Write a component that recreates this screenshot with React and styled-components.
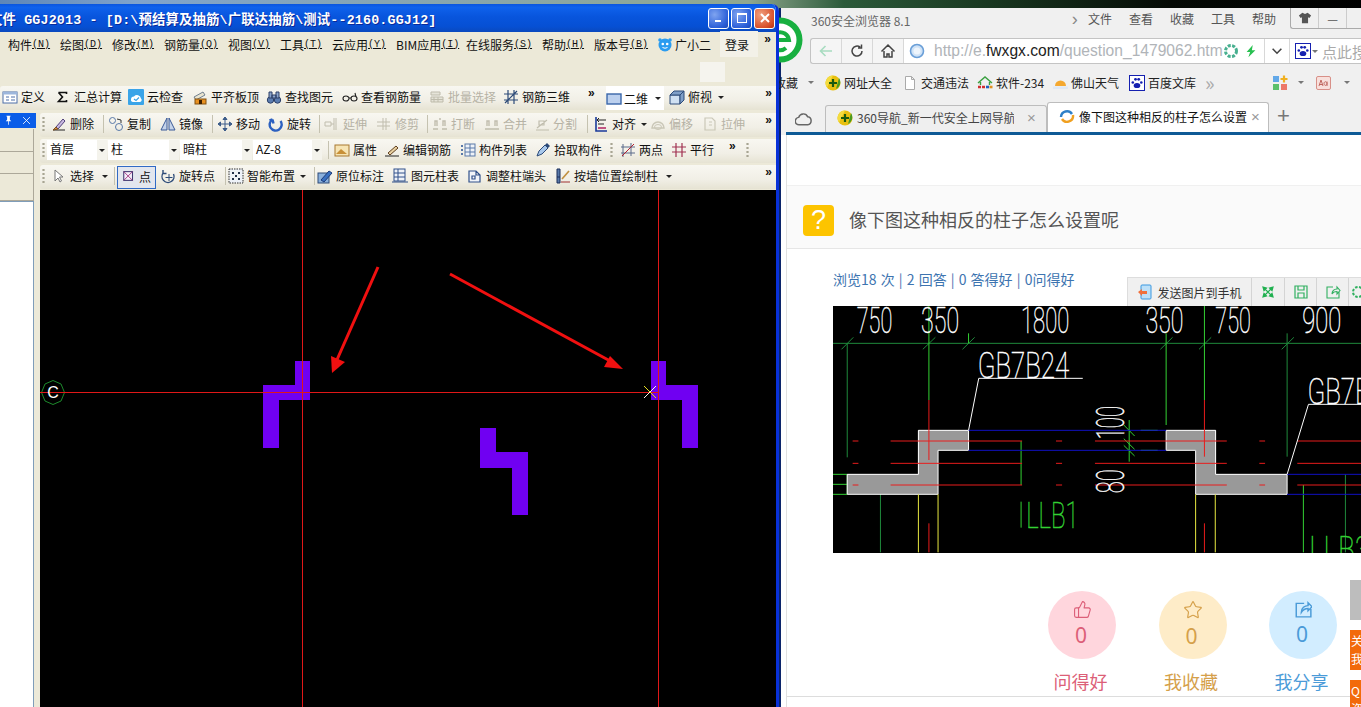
import React from 'react';
import styled, { createGlobalStyle } from 'styled-components';
import { ThumbsUp, Star } from 'lucide-react';

const Global = createGlobalStyle`
    html, body {
        margin: 0;
        padding: 0;
        overflow: hidden;
    }
    body {
        font-family: "Noto Sans CJK SC", "Liberation Sans", sans-serif;
        font-size: 12px;
    }
`;

const Desktop = styled.div`
    width: 1361px;
    height: 707px;
    display: flex;
    align-items: flex-start;
    overflow: hidden;
    background: linear-gradient(90deg, #5d86b8 0, #7fa3cc 10%, #90a890 55%, #2c5a3a 62%, #1a3a22 72%, #050a05 86%, #000 100%);
`;

/* ---------- left window ---------- */

const Window = styled.div`
    position: relative;
    z-index: 2;
    width: 779px;
    height: 703px;
    margin-top: 4px;
    flex: none;
    display: flex;
    flex-direction: column;
    background: #ece9d8;
    border-right: 3px solid #0831d9;
    box-sizing: border-box;
    border-top-right-radius: 7px;
    overflow: hidden;
`;

const TitleBar = styled.div`
    height: 28px;
    flex: none;
    display: flex;
    align-items: center;
    background: linear-gradient(180deg, #0a55df 0, #0f62ec 12%, #0855dd 45%, #0650d4 80%, #0a49be 100%);
`;

const TitleText = styled.div`
    margin-left: -11px;
    flex: 1;
    white-space: pre;
    letter-spacing: 0.17px;
    color: #fff;
    font: bold 13.33px "Liberation Mono", "Noto Sans CJK SC", monospace;
    text-shadow: 1px 1px 0 #0a2a9a;
`;

const CaptionButtons = styled.div`
    display: flex;
    gap: 2px;
    margin-right: 1px;
`;

const CaptionButton = styled.div`
    width: 21px;
    height: 21px;
    border: 1px solid #fff;
    border-radius: 3px;
    box-sizing: border-box;
    display: flex;
    align-items: center;
    justify-content: center;
    background: ${p => p.$red
        ? 'radial-gradient(circle at 30% 30%, #f0a080, #d8502a 70%, #b83010)'
        : 'radial-gradient(circle at 30% 30%, #7fa4f0, #2c5fd8 70%, #1c48b8)'};
`;

const Rows = styled.div`
    display: flex;
    align-items: center;
    height: ${p => p.$h || 24}px;
    flex: none;
    box-sizing: border-box;
    padding-left: ${p => p.$pad || 0}px;
    padding-bottom: 2px;
    margin-top: ${p => p.$top || 0}px;
    white-space: nowrap;
    color: #111;
`;

const ToolRow = styled(Rows)`
    background: linear-gradient(180deg, #f8f7f1 0, #f1efe6 60%, #e6e3d3 100%);
    border-radius: 3px 0 0 3px;
`;

const MenuItem = styled.div`
    width: ${p => p.$w}px;
    flex: none;
    display: flex;
    align-items: center;
    gap: ${p => p.$gap || 0}px;
    small {
        font: 10px "Liberation Mono", monospace;
        text-decoration: underline;
    }
`;

const LoginBox = styled.div`
    width: 33px;
    height: 26px;
    margin-left: -5px;
    display: flex;
    align-items: center;
    padding-left: 5px;
    background: #f3f1e8;
`;

const More = styled.div`
    margin-left: auto;
    margin-right: ${p => p.$right ?? 4}px;
    align-self: flex-start;
    font: bold 12px "Liberation Sans", sans-serif;
    line-height: 14px;
    color: #111;
`;

const FixedMore = styled(More)`
    margin-left: 0;
    margin-right: 0;
    width: ${p => p.$w}px;
    flex: none;
`;

const BlankSquare = styled.div`
    width: 25px;
    height: 20px;
    margin-left: 700px;
    margin-top: 2px;
    background: #f5f4ee;
`;

const Tool = styled.div`
    width: ${p => p.$w}px;
    margin-left: ${p => p.$left || 0}px;
    flex: none;
    display: flex;
    align-items: center;
    gap: 3px;
    color: ${p => p.$off ? '#aca899' : '#111'};
    opacity: ${p => p.$off ? 0.85 : 1};
    svg { flex: none; }
    span { margin-bottom: 2px; }
`;

const Caret = styled.i`
    width: 0;
    height: 0;
    margin-left: ${p => p.$gap ?? 2}px;
    border-left: 3px solid transparent;
    border-right: 3px solid transparent;
    border-top: 3px solid ${p => p.$color || '#222'};
    flex: none;
`;

const Sep = styled.div`
    width: ${p => p.$w}px;
    height: 18px;
    flex: none;
    background: linear-gradient(#c5c2b0, #c5c2b0) center / 1px 100% no-repeat;
`;

const Grip = styled.div`
    width: ${p => p.$w}px;
    height: 16px;
    flex: none;
    background: radial-gradient(circle, #a8a593 1px, transparent 1.3px) 0 0 / 100% 4px repeat-y;
    background-size: 3px 4px;
    background-repeat: repeat-y;
    background-position: 2px 0;
`;

const WhiteGroup = styled.div`
    width: 58px;
    height: 24px;
    flex: none;
    display: flex;
    align-items: center;
    gap: 2px;
    background: #fff;
    color: #111;
    margin-bottom: -2px;
`;

const Combo = styled.div`
    width: ${p => p.$w}px;
    height: 20px;
    flex: none;
    display: flex;
    padding-right: 1px;
    box-sizing: border-box;
`;

const ComboText = styled.div`
    flex: 1;
    background: #fff;
    padding-left: 3px;
    line-height: 18px;
`;

const ComboArrow = styled.div`
    width: 10px;
    display: flex;
    align-items: center;
    justify-content: center;
    background: #f4f3ec;
`;

const PointButton = styled.div`
    width: 39px;
    height: 23px;
    flex: none;
    box-sizing: border-box;
    display: flex;
    align-items: center;
    gap: 3px;
    padding-left: 4px;
    padding-bottom: 2px;
    margin-right: 4px;
    margin-bottom: -2px;
    background: #e3e6ee;
    border: 1px solid #316ac5;
`;

const Body = styled.div`
    flex: 1;
    min-height: 0;
    display: flex;
`;

const Panel = styled.div`
    width: 40px;
    flex: none;
    display: flex;
    flex-direction: column;
    padding-top: 3px;
    box-sizing: border-box;
`;

const PanelHead = styled.div`
    width: 36px;
    height: 15px;
    flex: none;
    margin-bottom: 1px;
    background: #0a5de8;
    display: flex;
    align-items: center;
    justify-content: flex-end;
    gap: 7px;
    padding-right: 4px;
    box-sizing: border-box;
`;

const PanelTab = styled.div`
    width: 34px;
    height: ${p => p.$h}px;
    flex: none;
    box-sizing: border-box;
    background: #ece9d8;
    border: 1px solid #aca899;
    border-left: 0;
    border-top: 0;
`;

const PanelList = styled.div`
    width: 34px;
    flex: 1;
    background: #fff;
    border-right: 1px solid #7f9db9;
    border-top: 1px solid #7f9db9;
    box-sizing: border-box;
`;

const Main = styled.div`
    flex: 1;
    min-width: 0;
    display: flex;
    flex-direction: column;
`;

const Canvas = styled.svg`
    display: block;
    margin-top: 1px;
    width: 736px;
    height: 517px;
    flex: none;
    background: #000;
`;

/* ---------- browser ---------- */

const Browser = styled.div`
    position: relative;
    flex: 1;
    min-width: 0;
    height: 699px;
    margin-top: 8px;
    display: flex;
    flex-direction: column;
    background: #f0f0f0;
    border-left: 2px solid #0a246a;
    box-sizing: border-box;
`;

const Logo = styled.svg`
    position: absolute;
    left: -24px;
    top: 9px;
`;

const BrowserTop = styled.div`
    height: 30px;
    flex: none;
    display: flex;
    align-items: flex-start;
    color: #555;
    white-space: nowrap;
`;

const BrowserName = styled.div`
    width: 301px;
    padding-left: 30px;
    box-sizing: border-box;
    margin-top: 4px;
    font-size: 12px;
    color: #666;
`;

const Chevron = styled.div`
    width: 17px;
    margin-top: 1px;
    font: 18px "Liberation Sans", sans-serif;
    color: #888;
`;

const BrowserMenu = styled.div`
    width: 41px;
    flex: none;
    margin-top: 2px;
    font-size: 12px;
    line-height: 18px;
    color: #555;
`;

const SkinBox = styled.div`
    margin-left: -3px;
    width: 70px;
    height: 20px;
    flex: none;
    display: flex;
    align-items: center;
    border-left: 1px solid #aaa;
    border-bottom: 1px solid #aaa;
    border-bottom-left-radius: 3px;
`;

const SkinButton = styled.div`
    width: 27px;
    height: 100%;
    display: flex;
    align-items: center;
    justify-content: center;
    border-right: 1px solid #ccc;
    color: #555;
`;

const AddressRow = styled.div`
    height: 27px;
    flex: none;
    padding-left: 29px;
    display: flex;
`;

const AddressBox = styled.div`
    flex: 1;
    min-width: 0;
    display: flex;
    align-items: center;
    height: 26px;
    border: 1px solid #c4c4c4;
    border-right: 0;
    border-radius: 3px 0 0 3px;
    box-sizing: border-box;
    background: #f5f5f5;
    white-space: nowrap;
`;

const NavButton = styled.div`
    width: 31px;
    height: 100%;
    flex: none;
    box-sizing: border-box;
    display: flex;
    align-items: center;
    justify-content: center;
    border-right: 1px solid #d8d8d8;
`;

const DropButton = styled(NavButton)`
    width: 26px;
    margin: 0 5px 0 6px;
    border-left: 1px solid #d8d8d8;
`;

const UrlBox = styled.div`
    flex: 1;
    min-width: 0;
    height: 100%;
    display: flex;
    align-items: center;
    background: #fff;
    padding-left: 5px;
    overflow: hidden;
    svg { flex: none; }
`;

const Url = styled.div`
    width: 289px;
    flex: none;
    margin-left: 9px;
    font: 15.6px "Liberation Sans", sans-serif;
    color: #b0b4b8;
    b {
        font-weight: normal;
        color: #222;
    }
`;

const SearchText = styled.div`
    font-size: 15px;
    color: #aaa;
    margin-left: 4px;
    flex: none;
`;

const BoltSlot = styled.div`
    margin-left: 5px;
    display: flex;
`;

const BookmarkRow = styled.div`
    height: 35px;
    flex: none;
    display: flex;
    align-items: center;
    white-space: nowrap;
    color: #222;
    margin-left: -1px;
`;

const Bookmark = styled.div`
    width: ${p => p.$w}px;
    flex: none;
    display: flex;
    align-items: center;
    gap: 3px;
    svg { flex: none; }
`;

const BookmarkMore = styled(Bookmark)`
    color: #aaa;
    font-size: 20px;
`;

const CutLabel = styled.span`
    margin-left: -6px;
`;

const TabRow = styled.div`
    height: 32px;
    flex: none;
    display: flex;
    align-items: flex-end;
    color: #333;
    white-space: nowrap;
`;

const CloudSlot = styled.div`
    width: 44px;
    height: 26px;
    flex: none;
    display: flex;
    align-items: center;
    padding-left: 14px;
    box-sizing: border-box;
`;

const Tab = styled.div`
    width: ${p => p.$w}px;
    height: ${p => p.$active ? 30 : 27}px;
    flex: none;
    box-sizing: border-box;
    display: flex;
    align-items: center;
    padding: 0 0 3px 11px;
    gap: 4px;
    background: ${p => p.$active ? '#fff' : '#efefef'};
    border: 1px solid #bdbdbd;
    border-bottom: 0;
    border-radius: 3px 3px 0 0;
    color: ${p => p.$active ? '#111' : '#444'};
    svg { flex: none; }
`;

const TabLabel = styled.div`
    width: ${p => p.$w}px;
    flex: none;
    overflow: hidden;
`;

const TabClose = styled.div`
    color: #999;
    font: 15px "Liberation Sans", sans-serif;
    margin-left: ${p => p.$gap}px;
`;

const NewTab = styled.div`
    margin: 0 0 4px 8px;
    font: 22px "Liberation Sans", sans-serif;
    line-height: 24px;
    color: #777;
`;

const AccentLine = styled.div`
    height: 3px;
    flex: none;
    margin-left: 5px;
    background: #0e5a96;
`;

const Page = styled.div`
    position: relative;
    flex: 1;
    min-height: 0;
    background: #fff;
    padding-left: 5px;
`;

const PageColumn = styled.div`
    height: 100%;
    border-left: 1px solid #e0e0e0;
    display: flex;
    flex-direction: column;
`;

const QuestionHead = styled.div`
    margin-top: 50px;
    height: 64px;
    flex: none;
    box-sizing: border-box;
    display: flex;
    align-items: center;
    gap: 15px;
    padding: 7px 0 0 16px;
    background: #fafafa;
    border-top: 1px solid #f0f0f0;
    border-bottom: 1px solid #e6e6e6;
`;

const QuestionMark = styled.div`
    width: 31px;
    height: 31px;
    flex: none;
    border-radius: 4px;
    background: #fdc400;
    color: #fff;
    text-align: center;
    font: 27px/31px "Liberation Sans", sans-serif;
`;

const QuestionTitle = styled.h1`
    margin: 0 0 4px;
    font-size: 18px;
    font-weight: normal;
    color: #555;
    white-space: nowrap;
`;

const Stats = styled.div`
    height: 57px;
    flex: none;
    box-sizing: border-box;
    padding: 20px 0 0 46px;
    font-size: 14px;
    line-height: 20px;
    word-spacing: 1px;
    color: #3d74b0;
    white-space: nowrap;
`;

const ImageBar = styled.div`
    position: absolute;
    left: 346px;
    top: 142px;
    height: 29px;
    width: 240px;
    display: flex;
    background: #f0f0f0;
    border: 1px solid #ddd;
    border-bottom: 0;
    box-sizing: border-box;
    color: #333;
    white-space: nowrap;
`;

const ImageBarItem = styled.div`
    width: ${p => p.$w}px;
    flex: none;
    display: flex;
    align-items: center;
    justify-content: center;
    gap: 4px;
    box-sizing: border-box;
    border-right: 1px solid #d4d4d4;
`;

const Cad = styled.svg`
    display: block;
    flex: none;
    margin-left: 46px;
    width: 528px;
    height: 247px;
    background: #000;
`;

const Actions = styled.div`
    display: flex;
    gap: 42.5px;
    padding-left: 261px;
    margin-top: 38px;
`;

const Action = styled.div`
    width: 68px;
    display: flex;
    flex-direction: column;
    align-items: center;
    color: ${p => p.$color};
`;

const ActionCircle = styled.div`
    width: 68px;
    height: 68px;
    border-radius: 50%;
    background: ${p => p.$bg};
    display: flex;
    flex-direction: column;
    align-items: center;
    padding-top: 9px;
    box-sizing: border-box;
`;

const ActionCount = styled.div`
    margin: 4px 2px 0 0;
    font: 21px/24px "Noto Sans", sans-serif;
`;

const ActionLabel = styled.div`
    margin: 9px 3px 0 0;
    font-size: 18px;
    line-height: 26px;
    white-space: nowrap;
`;

const BottomRule = styled.div`
    height: 1px;
    margin-top: 2px;
    background: #ddd;
`;

const SideTab = styled.div`
    position: absolute;
    right: 0;
    top: ${p => p.$top}px;
    width: 11px;
    height: ${p => p.$h}px;
    overflow: hidden;
    background: ${p => p.$bg};
    color: #fff;
    font-size: 12px;
    line-height: 18px;
    padding: 2px 0 0 1px;
    box-sizing: border-box;
    white-space: nowrap;
`;

/* ---------- icons ---------- */

const glyphs = {
    define: <><rect x="1" y="3" width="14" height="11" fill="#fff" stroke="#4d6fa8"/><rect x="1" y="3" width="14" height="2.5" fill="#9cb6dc"/><path d="M4 8h3M9 8h4M4 11h3M9 11h4" stroke="#4d6fa8"/></>,
    sigma: <path d="M3.5 3.5h8v1.5M3.5 3.5l4 4.5-4 4.5h8V11" fill="none" stroke="#111" strokeWidth="1.6"/>,
    cloud: <><rect width="16" height="16" fill="#3aa4e8" rx="1"/><path d="M3 10.5a3 3 0 0 1 3-3 4 4 0 0 1 7 2 2 2 0 0 1-1 3.5H5a2 2 0 0 1-2-2.5z" fill="#fff"/><path d="M6 10l2 1.5 3-3" fill="none" stroke="#3aa4e8" strokeWidth="1.2"/></>,
    level: <><path d="M2 8l9-5 2 3-9 5z" fill="#e8e4d0" stroke="#708090"/><rect x="3" y="10" width="11" height="5" fill="#e89020" stroke="#805010"/><rect x="7" y="11" width="3" height="4" fill="#402000"/></>,
    find: <><circle cx="4.5" cy="11" r="3.2" fill="#5a7cb0" stroke="#2c3f66"/><circle cx="11.5" cy="11" r="3.2" fill="#5a7cb0" stroke="#2c3f66"/><path d="M3 3h3v6H3zM10 3h3v6h-3zM6 6h4v3H6z" fill="#8aa4cc" stroke="#2c3f66"/></>,
    glasses: <path d="M1 9.5a3 2.5 0 1 0 6 0 3 2.5 0 1 0-6 0M9 9.5a3 2.5 0 1 0 6 0 3 2.5 0 1 0-6 0M7 9l2 0M14 8l-1-4" fill="none" stroke="#222" strokeWidth="1.1"/>,
    batch: <path d="M2 3h9v3H2zM2 8h12v5H2zM5 8v5M9 8v5M2 10.5h12" fill="#e4e2d6" stroke="#b6b3a2"/>,
    rebar3d: <path d="M1 5h14M1 11h14M5 1v14M11 1v14M2 14L14 2" fill="none" stroke="#2c4a78" strokeWidth="1.2"/>,
    plane2d: <rect x="1" y="4" width="14" height="10" fill="#bcd0ee" stroke="#3a66a8" strokeWidth="1.4"/>,
    cube: <><path d="M1 6h10v9H1z" fill="#cfe0f2" stroke="#2c4a78"/><path d="M1 6l4-4h10l-4 4zM11 6l4-4v9l-4 4z" fill="#7f9fc8" stroke="#2c4a78"/></>,
    erase: <><path d="M2 14h12" stroke="#222"/><path d="M5 11l7-8 2 2-7 8z" fill="#c8b8e0" stroke="#50407a"/><path d="M2 14l3-3 2 2z" fill="#d09048" stroke="#805020"/></>,
    copy: <><circle cx="4.5" cy="4.5" r="3" fill="none" stroke="#5878a8"/><circle cx="11" cy="11" r="3.5" fill="none" stroke="#5878a8"/><path d="M9 3l4 1v3" fill="none" stroke="#333"/></>,
    mirror: <path d="M7 2v12H1zM9 2v12h6z" fill="#c6d4ea" stroke="#3a5a98"/>,
    move: <path d="M8 1v14M1 8h14M8 1L6 3.5h4zM8 15l-2-2.5h4zM1 8l2.5-2v4zM15 8l-2.5-2v4z" fill="#4a6a9a" stroke="#3a5a88"/>,
    rotate: <path d="M12.5 5a6 6 0 1 1-8-1.5M4.5 3.5l1 4M4.5 3.5l-3 1" fill="none" stroke="#2c60c0" strokeWidth="2.4"/>,
    extend: <path d="M1 6h6v4H1zM10 2v12M12 2v12M7 8h3" fill="none" stroke="#b8b5a4"/>,
    trim: <path d="M7 2v12M10 2v12M1 6h13M1 10h13" fill="none" stroke="#b8b5a4"/>,
    breakLine: <path d="M1 13h5M10 13h5M3 10V5h2v5M11 10V5h2v5M7 3h2" fill="none" stroke="#b8b5a4" strokeWidth="1.4"/>,
    merge: <path d="M1 13h14M3 10V5h2v5M11 10V5h2v5" fill="none" stroke="#b8b5a4" strokeWidth="1.4"/>,
    split: <path d="M2 14h13M3 12L13 4M5 5h5v4H5z" fill="none" stroke="#b8b5a4" strokeWidth="1.2"/>,
    align: <><path d="M3 1v14h11" fill="none" stroke="#1a3a9a" strokeWidth="1.6"/><path d="M5 4h8M5 8h6M6 2L4 4l2 2" fill="none" stroke="#222"/><path d="M5 12h8" stroke="#b02060" strokeWidth="1.6"/></>,
    offset: <><path d="M2 12a6 6 0 0 1 12 0z" fill="none" stroke="#c4c1b0" strokeWidth="1.5"/><ellipse cx="8" cy="11" rx="3.5" ry="2.5" fill="none" stroke="#c4c1b0"/></>,
    stretch: <path d="M3 2h7l3 3v9H3zM7 6h3M7 9h3" fill="none" stroke="#c4c1b0" strokeWidth="1.2"/>,
    props: <><rect x="1" y="3" width="14" height="11" fill="#f6e4b4" stroke="#a87830"/><path d="M2 12l5-5 6 5z" fill="#c89038"/></>,
    editBar: <><path d="M1 14h14" stroke="#222"/><path d="M4 11l8-7 2 2-8 7z" fill="#e8d0a0" stroke="#604020"/></>,
    list: <><path d="M1 3h2v2H1zM1 7h2v2H1zM1 11h2v2H1z" fill="#5878a8"/><rect x="5" y="2" width="10" height="12" fill="#eef2f8" stroke="#5878a8"/><path d="M5 6h10M5 10h10M10 2v12" stroke="#5878a8"/></>,
    picker: <><path d="M2 14l2-5 6-6 3 3-6 6z" fill="#a8c8ec" stroke="#2c4a78"/><path d="M10 3l2-2 3 3-2 2z" fill="#2c4a78"/></>,
    twoPointRed: <><path d="M3 2v13M11 1v13M1 5h14M1 11h14" fill="none" stroke="#5a6a8a"/><path d="M2 14L14 2" stroke="#b02030"/></>,
    parallelRed: <path d="M5 1v14M11 1v14M1 5h14M1 10h14" fill="none" stroke="#a03050" strokeWidth="1.2"/>,
    pointer: <path d="M4 2v11l3-3 2 4 1.5-1-2-4h3.5z" fill="#fff" stroke="#777"/>,
    point: <><rect x="2" y="3" width="10" height="10" fill="#f4eef8" stroke="#403870" strokeWidth="1.2"/><path d="M2 3l10 10M12 3L2 13" stroke="#a03080"/></>,
    rotatePoint: <><path d="M13.5 6a6 6 0 1 1-10-1.5M3 2v3.5h3.5" fill="none" stroke="#2c4a78" strokeWidth="1.4"/><path d="M9 6v7M5.5 9.5h7" stroke="#2c4a78"/></>,
    smart: <><rect x="1" y="1" width="14" height="14" fill="#eef2f8" stroke="#333" strokeDasharray="1.5 1"/><path d="M4 4h2v2H4zM10 4h2v2h-2zM4 10h2v2H4zM10 10h2v2h-2zM7 7h2v2H7z" fill="#20304a"/></>,
    origin: <><rect x="1" y="5" width="11" height="10" fill="#8ab0dc" stroke="#2c4a78"/><path d="M4 12l8-9 3 2-8 9z" fill="#3870c0" stroke="#1c3a78"/></>,
    table: <><rect x="2" y="1" width="11" height="12" fill="#eef2f8" stroke="#30508a"/><path d="M2 5h11M2 9h11M6 1v12M0 14h16" stroke="#30508a"/></>,
    trimHead: <path d="M2 3h7l4 4v7H2zM9 3v4h4M5 8h3v3H5z" fill="#f2f5fa" stroke="#30508a" strokeWidth="1.2"/>,
    byWall: <><path d="M2 1h3v14H2zM2 9h3" fill="#5878a8" stroke="#1a2f5a"/><path d="M6 14h9" stroke="#a03030"/><path d="M7 11l7-8" stroke="#c09040" strokeWidth="1.6"/></>,
    nav360: <><circle cx="8" cy="8" r="7.5" fill="#e8c010"/><path d="M8 .5a7.5 7.5 0 0 0-6 12z" fill="#f4dc40"/><path d="M11 14a7.5 7.5 0 0 0 3-11z" fill="#4a9a20"/><path d="M8 4v8M4 8h8" stroke="#1a5a10" strokeWidth="2.2"/></>,
    doc: <path d="M3.5 1.5h6l3 3v10h-9zM9.5 1.5v3h3" fill="#fff" stroke="#aaa"/>,
    house2345: <><path d="M1 8l7-6 7 6M3.5 7v3M12.5 7v3" fill="none" stroke="#3aa040" strokeWidth="1.4"/><path d="M1 12h3M5 12h3" stroke="#d03030" strokeWidth="2.6"/><path d="M9 12h3" stroke="#2060c0" strokeWidth="2.6"/><path d="M12.5 12h3" stroke="#e09020" strokeWidth="2.6"/></>,
    sun: <><path d="M3 11a5.5 5.5 0 0 1 11 0z" fill="#f4a830"/><path d="M1 11.5h16v2.5H1z" fill="#dfe8f4"/></>,
    paw: <><rect x=".5" y=".5" width="15" height="15" fill="#fff" stroke="#1520b0"/><ellipse cx="8" cy="10.5" rx="3.3" ry="2.6" fill="#1520b0"/><circle cx="3.8" cy="7.5" r="1.3" fill="#1520b0"/><circle cx="6.5" cy="4.3" r="1.4" fill="#1520b0"/><circle cx="9.7" cy="4.3" r="1.4" fill="#1520b0"/><circle cx="12.3" cy="7.5" r="1.3" fill="#1520b0"/></>,
    tiles: <><rect x="1" y="1" width="6" height="6" fill="#62a8e8"/><rect x="1" y="9" width="6" height="6" fill="#5cc06c"/><rect x="9" y="9" width="6" height="6" fill="#ec7868"/><path d="M12 .5v7M8.5 4h7" stroke="#f0b020" strokeWidth="2.2"/></>,
    adblock: <><rect x=".5" y="1.5" width="14" height="13" rx="1.5" fill="#f8e0dc" stroke="#d89088"/><path d="M3 11l2-6 2 6M4 9.5h2M11 6.5v4.5M11 8.5a1.5 1.8 0 1 0 0 .1" fill="none" stroke="#c06860"/></>,
    ieBlue: <><path d="M2 9a6 6 0 0 1 11-3" fill="none" stroke="#2e80c8" strokeWidth="2.4"/><path d="M14 7a6 6 0 0 1-11 4" fill="none" stroke="#f0a020" strokeWidth="2.4"/><circle cx="8" cy="8" r="1.5" fill="#fff"/></>,
    cloudLine: <path d="M4 13a3.5 3.5 0 0 1-.5-7 4.5 4.5 0 0 1 8.5-.5 3.8 3.8 0 0 1 0 7.5z" fill="none" stroke="#666" strokeWidth="1.4"/>,
    globe: <><circle cx="8" cy="8" r="6.5" fill="#cfe2f6" stroke="#6a9fd8" strokeWidth="1.6"/><circle cx="8" cy="8" r="3.5" fill="#eef5fc"/></>,
    wheel: <circle cx="8" cy="8" r="5.5" fill="none" stroke="#48b090" strokeWidth="3" strokeDasharray="3 1.4"/>,
    bolt: <path d="M10 1L3 9h4l-2 6 8-8H9z" fill="#28c050"/>,
    phone: <><rect x="4" y="1" width="10" height="14" rx="1" fill="#bde0f8" stroke="#3a98e0"/><path d="M1 8l4-3v2h5v3H5v2z" fill="#f0703c"/></>,
    expand: <path d="M3 3l3.5 1L4 6.5zM13 3l-1 3.5L9.5 4zM3 13l1-3.5L6.5 12zM13 13l-3.5-1 2.5-2.5zM4 4l8 8M12 4l-8 8" fill="#20b050" stroke="#20b050" strokeWidth="1.2"/>,
    save: <path d="M2 2h12v12H2zM5 2v4h6V2M5 14V9h6v5" fill="none" stroke="#30b060" strokeWidth="1.2"/>,
    shareBox: <path d="M8 3H2v11h12V8M7 10c0-3 2-5 5-5V3l3 3.5L12 10V7.5C10 7.5 8 8 7 10z" fill="none" stroke="#30b060" strokeWidth="1.1"/>,
    shareBlue: <path d="M9 3H2v12h13V8M6.5 11c0-4 3-6 6-6V2.5L16 6l-3.5 3.5V7.5c-2.5 0-4.5 1-6 3.5z" fill="none" stroke="currentColor" strokeWidth="1.3"/>,
    gear: <circle cx="8" cy="8" r="5" fill="none" stroke="#30b060" strokeWidth="2" strokeDasharray="2.5 1.5"/>,
    back: <path d="M14 8H3M7.5 3L2.5 8l5 5" fill="none" stroke="#a8dcc0" strokeWidth="1.6"/>,
    reload: <path d="M13 8a5 5 0 1 1-1.8-3.8M12.5 1.5v3.5H9" fill="none" stroke="#444" strokeWidth="1.5"/>,
    home: <path d="M1.5 8.5L8 2l6.5 6.5M4 8v6h3v-3h2v3h3V8" fill="none" stroke="#444" strokeWidth="1.5"/>,
    down: <path d="M3 5.5L8 10.5l5-5" fill="none" stroke="#444" strokeWidth="1.8"/>,
    shirt: <path d="M5 2L1 5l2 3 1.5-1v7h7V7L13 8l2-3-4-3-3 1.5z" fill="#555"/>,
    pin: <path d="M5 1h6v1H10v5l2 2H8.5v5h-1V9H4l2-2V2H5z" fill="#fff"/>,
    closeCross: <path d="M3 3l10 10M13 3L3 13" stroke="#fff" strokeWidth="1.2"/>,
    xiaoer: <><circle cx="8" cy="9" r="6.5" fill="#2a9cf0"/><circle cx="3" cy="4" r="1.8" fill="#2a9cf0"/><circle cx="13" cy="4" r="1.8" fill="#2a9cf0"/><circle cx="5.8" cy="8" r="1.3" fill="#fff"/><circle cx="10.2" cy="8" r="1.3" fill="#fff"/><path d="M5.5 11.5q2.5 1.5 5 0" fill="none" stroke="#fff"/></>,
};

const Ico = ({ n, s = 16 }) => (
    <svg width={s} height={s} viewBox="0 0 16 16">{glyphs[n]}</svg>
);

const ToolItem = ({ w, n, label, off, arrow, gap, left }) => (
    <Tool $w={w} $off={off} $left={left}>
        <Ico n={n} />
        <span>{label}</span>
        {arrow && <Caret $gap={gap} />}
    </Tool>
);

const menus = [
    ['构件', 'N', 52], ['绘图', 'D', 52], ['修改', 'M', 52], ['钢筋量', 'Q', 64],
    ['视图', 'V', 52], ['工具', 'T', 52], ['云应用', 'Y', 64], ['BIM应用', 'I', 70],
    ['在线服务', 'S', 76], ['帮助', 'H', 52], ['版本号', 'B', 63],
];

const topTools = [
    { n: 'define', label: '定义', w: 53 },
    { n: 'sigma', label: '汇总计算', w: 73 },
    { n: 'cloud', label: '云检查', w: 64 },
    { n: 'level', label: '平齐板顶', w: 74 },
    { n: 'find', label: '查找图元', w: 76 },
    { n: 'glasses', label: '查看钢筋量', w: 87 },
    { n: 'batch', label: '批量选择', w: 74, off: true },
    { n: 'rebar3d', label: '钢筋三维', w: 85 },
];

const secondRow = [
    { n: 'erase', label: '删除', w: 48 }, 9,
    { n: 'copy', label: '复制', w: 52 },
    { n: 'mirror', label: '镜像', w: 48 }, 9,
    { n: 'move', label: '移动', w: 51 },
    { n: 'rotate', label: '旋转', w: 47 }, 9,
    { n: 'extend', label: '延伸', w: 52, off: true },
    { n: 'trim', label: '修剪', w: 47, off: true }, 9,
    { n: 'breakLine', label: '打断', w: 52, off: true },
    { n: 'merge', label: '合并', w: 50, off: true },
    { n: 'split', label: '分割', w: 48, off: true }, 11,
    { n: 'align', label: '对齐', w: 57, arrow: true },
    { n: 'offset', label: '偏移', w: 52, off: true },
    { n: 'stretch', label: '拉伸', w: 58, off: true },
];

const combos = [['首层', 61], ['柱', 72], ['暗柱', 73], ['AZ-8', 70]];

const thirdTools = [
    { n: 'props', label: '属性', w: 50 },
    { n: 'editBar', label: '编辑钢筋', w: 76 },
    { n: 'list', label: '构件列表', w: 75 },
    { n: 'picker', label: '拾取构件', w: 73 },
];

const fourthTools = [
    { n: 'origin', label: '原位标注', w: 75 },
    { n: 'table', label: '图元柱表', w: 75 },
    { n: 'trimHead', label: '调整柱端头', w: 88 },
    { n: 'byWall', label: '按墙位置绘制柱', w: 122, arrow: true, gap: 5 },
];

const renderTools = (tools) => tools.map((t, i) => (
    typeof t === 'number'
        ? <Sep key={i} $w={t} />
        : <ToolItem key={i} {...t} />
));

const CanvasDrawing = () => (
    <Canvas viewBox="40 190 736 517">
        <g fill="#7000f2">
            <polygon points="295,361 310,361 310,400 279,400 279,448 263,448 263,385 295,385" />
            <polygon points="651,361 666,361 666,385 698,385 698,448 682,448 682,400 651,400" />
            <polygon points="480,428 496,428 496,452 528,452 528,515 512,515 512,468 480,468" />
        </g>
        <g stroke="#e01818" strokeWidth="1" shapeRendering="crispEdges">
            <line x1="302.5" y1="190" x2="302.5" y2="707" />
            <line x1="658.5" y1="190" x2="658.5" y2="707" />
            <line x1="40" y1="392.5" x2="658" y2="392.5" />
        </g>
        <path d="M378 267L336 362M450 274L612 362" stroke="#f01010" strokeWidth="3" fill="none" />
        <polygon points="332,373 331,356 345,362" fill="#f01010" />
        <polygon points="623,369 610,356 604,367" fill="#f01010" />
        <path d="M644 386l6 6M656 398l-6-6" stroke="#e8e020" strokeWidth="1" />
        <path d="M656 386l-6 6M644 398l6-6" stroke="#f8f8e8" strokeWidth="1" />
        <polygon points="53,380.5 61,384 64.5,392.5 61,401 53,404.5 45,401 41.5,392.5 45,384" fill="#000" stroke="#1d8a2c" />
        <line x1="40" y1="392.5" x2="66" y2="392.5" stroke="#e01818" />
        <text x="53" y="398" textAnchor="middle" fill="#fff" fontFamily="Liberation Sans" fontSize="16">C</text>
    </Canvas>
);

const cadText = {
    fontFamily: 'Roboto, "Liberation Sans", sans-serif',
    fontWeight: 100,
    fontSize: 112,
};

const CadDrawing = () => (
    <Cad viewBox="10 18 1558 741" preserveAspectRatio="none">
        <g fill="none" shapeRendering="crispEdges">
            <path d="M10 130H1568" stroke="#1f8a3c" vectorEffect="non-scaling-stroke" />
            <path d="M35 148L70 112M275 148L312 112M392 148L428 112M976 148L1012 112M1090 148L1126 112M1334 148L1370 112" stroke="#1f8a3c" vectorEffect="non-scaling-stroke" />
            <path d="M52 130V472M1350 100V470M150 523V757M1522 523V757M1200 555H1350" stroke="#1f8a3c" vectorEffect="non-scaling-stroke" />
            <path d="M293 18V300M1106 18V300M993 100V375M410 100V130M10 523H52M10 553H52M10 583H52M52 523V583M565 423V555M565 605V683M884 360V485M918 391H968M918 451H968M1398 555V757" stroke="#33d133" vectorEffect="non-scaling-stroke" />
            <path d="M868 375L900 408M868 416L900 448M868 436L900 468" stroke="#33d133" vectorEffect="non-scaling-stroke" />
            <path d="M118 555L165 555M150 540L165 580" stroke="#1f8a3c" vectorEffect="non-scaling-stroke" />
            <polygon points="262,391 410,391 410,451 320,451 320,583 52,583 52,523 262,523" fill="#999" stroke="#fff" vectorEffect="non-scaling-stroke" />
            <polygon points="993,391 1139,391 1139,523 1350,523 1350,583 1080,583 1080,451 993,451" fill="#999" stroke="#fff" vectorEffect="non-scaling-stroke" />
            <path d="M410 391H993M410 451H993M1350 523H1568M1350 583H1568" stroke="#1010c0" vectorEffect="non-scaling-stroke" />
            <path d="M68 423H85M180 423H568M668 423H686M783 423H1172M1268 423H1285M1380 423H1568M68 490H85M180 490H568M668 490H686M783 490H1172M1268 490H1285M1380 490H1568M68 555H85M180 555H568M668 555H686M783 555H1172M1268 555H1285M1380 555H1568M293 300V480M1106 300V470M293 670V757M1106 670V757" stroke="#e81c1c" vectorEffect="non-scaling-stroke" />
            <path d="M262 583V757M320 583V757M1080 583V757M1138 583V757" stroke="#e8e840" vectorEffect="non-scaling-stroke" />
            <path d="M440 235H747M440 235L410 391M1413 313H1568M1413 313L1350 523" stroke="#fff" vectorEffect="non-scaling-stroke" />
        </g>
        <g fill="#fff" stroke="#fff" strokeWidth="1.5" style={cadText}>
            <text x="80" y="100" textLength="105" lengthAdjust="spacingAndGlyphs">750</text>
            <text x="270" y="100" textLength="112" lengthAdjust="spacingAndGlyphs">350</text>
            <text x="565" y="100" textLength="142" lengthAdjust="spacingAndGlyphs">1800</text>
            <text x="932" y="100" textLength="112" lengthAdjust="spacingAndGlyphs">350</text>
            <text x="1138" y="100" textLength="105" lengthAdjust="spacingAndGlyphs">750</text>
            <text x="1395" y="100" textLength="115" lengthAdjust="spacingAndGlyphs">900</text>
            <text x="437" y="233" textLength="270" lengthAdjust="spacingAndGlyphs">GB7B24</text>
            <text x="1410" y="311" textLength="270" lengthAdjust="spacingAndGlyphs">GB7B24</text>
            <text transform="translate(868,418) rotate(-90)" fontSize="117" textLength="100" lengthAdjust="spacingAndGlyphs">100</text>
            <text transform="translate(868,580) rotate(-90)" fontSize="117" textLength="72" lengthAdjust="spacingAndGlyphs">80</text>
        </g>
        <g fill="#33d133" stroke="#33d133" strokeWidth="1.5" style={cadText}>
            <text x="580" y="683" textLength="155" lengthAdjust="spacingAndGlyphs">LLB1</text>
            <text x="1415" y="785" textLength="180" lengthAdjust="spacingAndGlyphs">LLB3</text>
        </g>
    </Cad>
);

export default function App() {
    return (
        <Desktop>
            <Global />
            <Window>
                <TitleBar>
                    <TitleText>{'文件 GGJ2013 - [D:\\预结算及抽筋\\广联达抽筋\\测试--2160.GGJ12]'}</TitleText>
                    <CaptionButtons>
                        <CaptionButton><svg width="10" height="10"><rect x="1" y="7" width="6" height="2" fill="#fff" /></svg></CaptionButton>
                        <CaptionButton><svg width="12" height="12"><rect x="1.5" y="1.5" width="9" height="9" fill="none" stroke="#fff" /><rect x="1" y="1" width="10" height="2" fill="#fff" /></svg></CaptionButton>
                        <CaptionButton $red><svg width="12" height="12"><path d="M2 2l8 8M10 2l-8 8" stroke="#fff" strokeWidth="2" /></svg></CaptionButton>
                    </CaptionButtons>
                </TitleBar>
                <Rows $h={26} $pad={8}>
                    {menus.map(([label, key, w]) => (
                        <MenuItem key={label} $w={w}>{label}<small>({key})</small></MenuItem>
                    ))}
                    <MenuItem $w={68} $gap={2}><Ico n="xiaoer" />广小二</MenuItem>
                    <LoginBox>登录</LoginBox>
                    <More $right={5}>»</More>
                </Rows>
                <Rows $h={28}><BlankSquare /></Rows>
                <ToolRow $pad={2}>
                    {renderTools(topTools)}
                    <FixedMore $w={18}>»</FixedMore>
                    <WhiteGroup><Ico n="plane2d" /><span>二维</span><Caret $gap={5} /></WhiteGroup>
                    <Tool $w={70} $left={5}><Ico n="cube" /><span>俯视</span><Caret $gap={3} /></Tool>
                    <More>»</More>
                </ToolRow>
                <Body>
                    <Panel>
                        <PanelHead><Ico n="pin" s={11} /><Ico n="closeCross" s={11} /></PanelHead>
                        <PanelTab $h={23} />
                        <PanelTab $h={22} />
                        <PanelTab $h={27} />
                        <PanelList />
                    </Panel>
                    <Main>
                        <ToolRow $top={3}>
                            <Grip $w={11} />
                            {renderTools(secondRow)}
                            <More>»</More>
                        </ToolRow>
                        <ToolRow $top={2}>
                            <Grip $w={7} />
                            {combos.map(([label, w]) => (
                                <Combo key={label} $w={w}>
                                    <ComboText>{label}</ComboText>
                                    <ComboArrow><Caret $gap={0} /></ComboArrow>
                                </Combo>
                            ))}
                            <Sep $w={11} />
                            {renderTools(thirdTools)}
                            <Grip $w={12} />
                            <ToolItem n="twoPointRed" label="两点" w={51} />
                            <ToolItem n="parallelRed" label="平行" w={58} />
                            <FixedMore $w={15}>»</FixedMore>
                            <Grip $w={7} />
                        </ToolRow>
                        <ToolRow $top={2}>
                            <Grip $w={11} />
                            <ToolItem n="pointer" label="选择" w={60} arrow gap={5} />
                            <Sep $w={6} />
                            <PointButton><Ico n="point" s={14} />点</PointButton>
                            <ToolItem n="rotatePoint" label="旋转点" w={62} />
                            <Sep $w={6} />
                            <ToolItem n="smart" label="智能布置" w={83} arrow />
                            <Sep $w={6} />
                            {renderTools(fourthTools)}
                            <More>»</More>
                        </ToolRow>
                        <CanvasDrawing />
                    </Main>
                </Body>
            </Window>
            <Browser>
                <Logo width="46" height="46" viewBox="0 0 46 46">
                    <circle cx="23" cy="23" r="19.5" fill="#fff" stroke="#18b040" strokeWidth="6" />
                    <path d="M14 23h18a9 9 0 1 0-3 8" fill="none" stroke="#18b040" strokeWidth="4" />
                </Logo>
                <BrowserTop>
                    <BrowserName>360安全浏览器 8.1</BrowserName>
                    <Chevron>›</Chevron>
                    {['文件', '查看', '收藏', '工具', '帮助'].map(m => <BrowserMenu key={m}>{m}</BrowserMenu>)}
                    <SkinBox>
                        <SkinButton><Ico n="shirt" s={14} /></SkinButton>
                        <SkinButton>—</SkinButton>
                    </SkinBox>
                </BrowserTop>
                <AddressRow>
                    <AddressBox>
                        <NavButton><Ico n="back" /></NavButton>
                        <NavButton><Ico n="reload" /></NavButton>
                        <NavButton><Ico n="home" /></NavButton>
                        <UrlBox>
                            <Ico n="globe" />
                            <Url>http://e.<b>fwxgx.com</b>/question_1479062.htm</Url>
                            <Ico n="wheel" />
                            <BoltSlot><Ico n="bolt" s={14} /></BoltSlot>
                            <DropButton><Ico n="down" s={14} /></DropButton>
                            <Ico n="paw" />
                            <Caret $gap={1} $color="#777" />
                            <SearchText>点此搜</SearchText>
                        </UrlBox>
                    </AddressBox>
                </AddressRow>
                <BookmarkRow>
                    <Bookmark $w={28}><CutLabel>收藏</CutLabel></Bookmark>
                    <Bookmark $w={17}><Caret $gap={0} $color="#777" /></Bookmark>
                    <Bookmark $w={77}><Ico n="nav360" />网址大全</Bookmark>
                    <Bookmark $w={75}><Ico n="doc" />交通违法</Bookmark>
                    <Bookmark $w={75}><Ico n="house2345" />软件-234</Bookmark>
                    <Bookmark $w={77}><Ico n="sun" />佛山天气</Bookmark>
                    <Bookmark $w={76}><Ico n="paw" />百度文库</Bookmark>
                    <BookmarkMore $w={67}>»</BookmarkMore>
                    <Bookmark $w={44}><Ico n="tiles" /><Caret $gap={7} $color="#777" /></Bookmark>
                    <Bookmark $w={40}><Ico n="adblock" /><Caret $gap={9} $color="#777" /></Bookmark>
                </BookmarkRow>
                <TabRow>
                    <CloudSlot><Ico n="cloudLine" s={17} /></CloudSlot>
                    <Tab $w={222}>
                        <Ico n="nav360" />
                        <TabLabel $w={157}>360导航_新一代安全上网导航</TabLabel>
                        <TabClose $gap={9}>×</TabClose>
                    </Tab>
                    <Tab $w={222} $active>
                        <Ico n="ieBlue" />
                        <TabLabel $w={168}>像下图这种相反的柱子怎么设置</TabLabel>
                        <TabClose $gap={0}>×</TabClose>
                    </Tab>
                    <NewTab>+</NewTab>
                </TabRow>
                <AccentLine />
                <Page>
                    <PageColumn>
                        <QuestionHead>
                            <QuestionMark>?</QuestionMark>
                            <QuestionTitle>像下图这种相反的柱子怎么设置呢</QuestionTitle>
                        </QuestionHead>
                        <Stats>浏览18 次 | 2 回答 | 0 答得好 | 0问得好</Stats>
                        <CadDrawing />
                        <Actions>
                            <Action $color="#dc5f78">
                                <ActionCircle $bg="#ffd6dd"><ThumbsUp size={19} strokeWidth={1.4} />
                                    <ActionCount>0</ActionCount>
                                </ActionCircle>
                                <ActionLabel>问得好</ActionLabel>
                            </Action>
                            <Action $color="#d5a04a">
                                <ActionCircle $bg="#feecc8"><Star size={20} strokeWidth={1.4} />
                                    <ActionCount>0</ActionCount>
                                </ActionCircle>
                                <ActionLabel>我收藏</ActionLabel>
                            </Action>
                            <Action $color="#4b9bd8">
                                <ActionCircle $bg="#d2edff"><Ico n="shareBlue" s={18} />
                                    <ActionCount>0</ActionCount>
                                </ActionCircle>
                                <ActionLabel>我分享</ActionLabel>
                            </Action>
                        </Actions>
                        <BottomRule />
                    </PageColumn>
                    <ImageBar>
                        <ImageBarItem $w={124}><Ico n="phone" />发送图片到手机</ImageBarItem>
                        <ImageBarItem $w={33}><Ico n="expand" /></ImageBarItem>
                        <ImageBarItem $w={32}><Ico n="save" /></ImageBarItem>
                        <ImageBarItem $w={32}><Ico n="shareBox" /></ImageBarItem>
                        <ImageBarItem $w={18}><Ico n="gear" /></ImageBarItem>
                    </ImageBar>
                    <SideTab $top={445} $h={40} $bg="#bdbdbd" />
                    <SideTab $top={495} $h={40} $bg="#f26a0a">关<br />我</SideTab>
                    <SideTab $top={545} $h={27} $bg="#f26a0a">Q<br />咨</SideTab>
                </Page>
            </Browser>
        </Desktop>
    );
}
